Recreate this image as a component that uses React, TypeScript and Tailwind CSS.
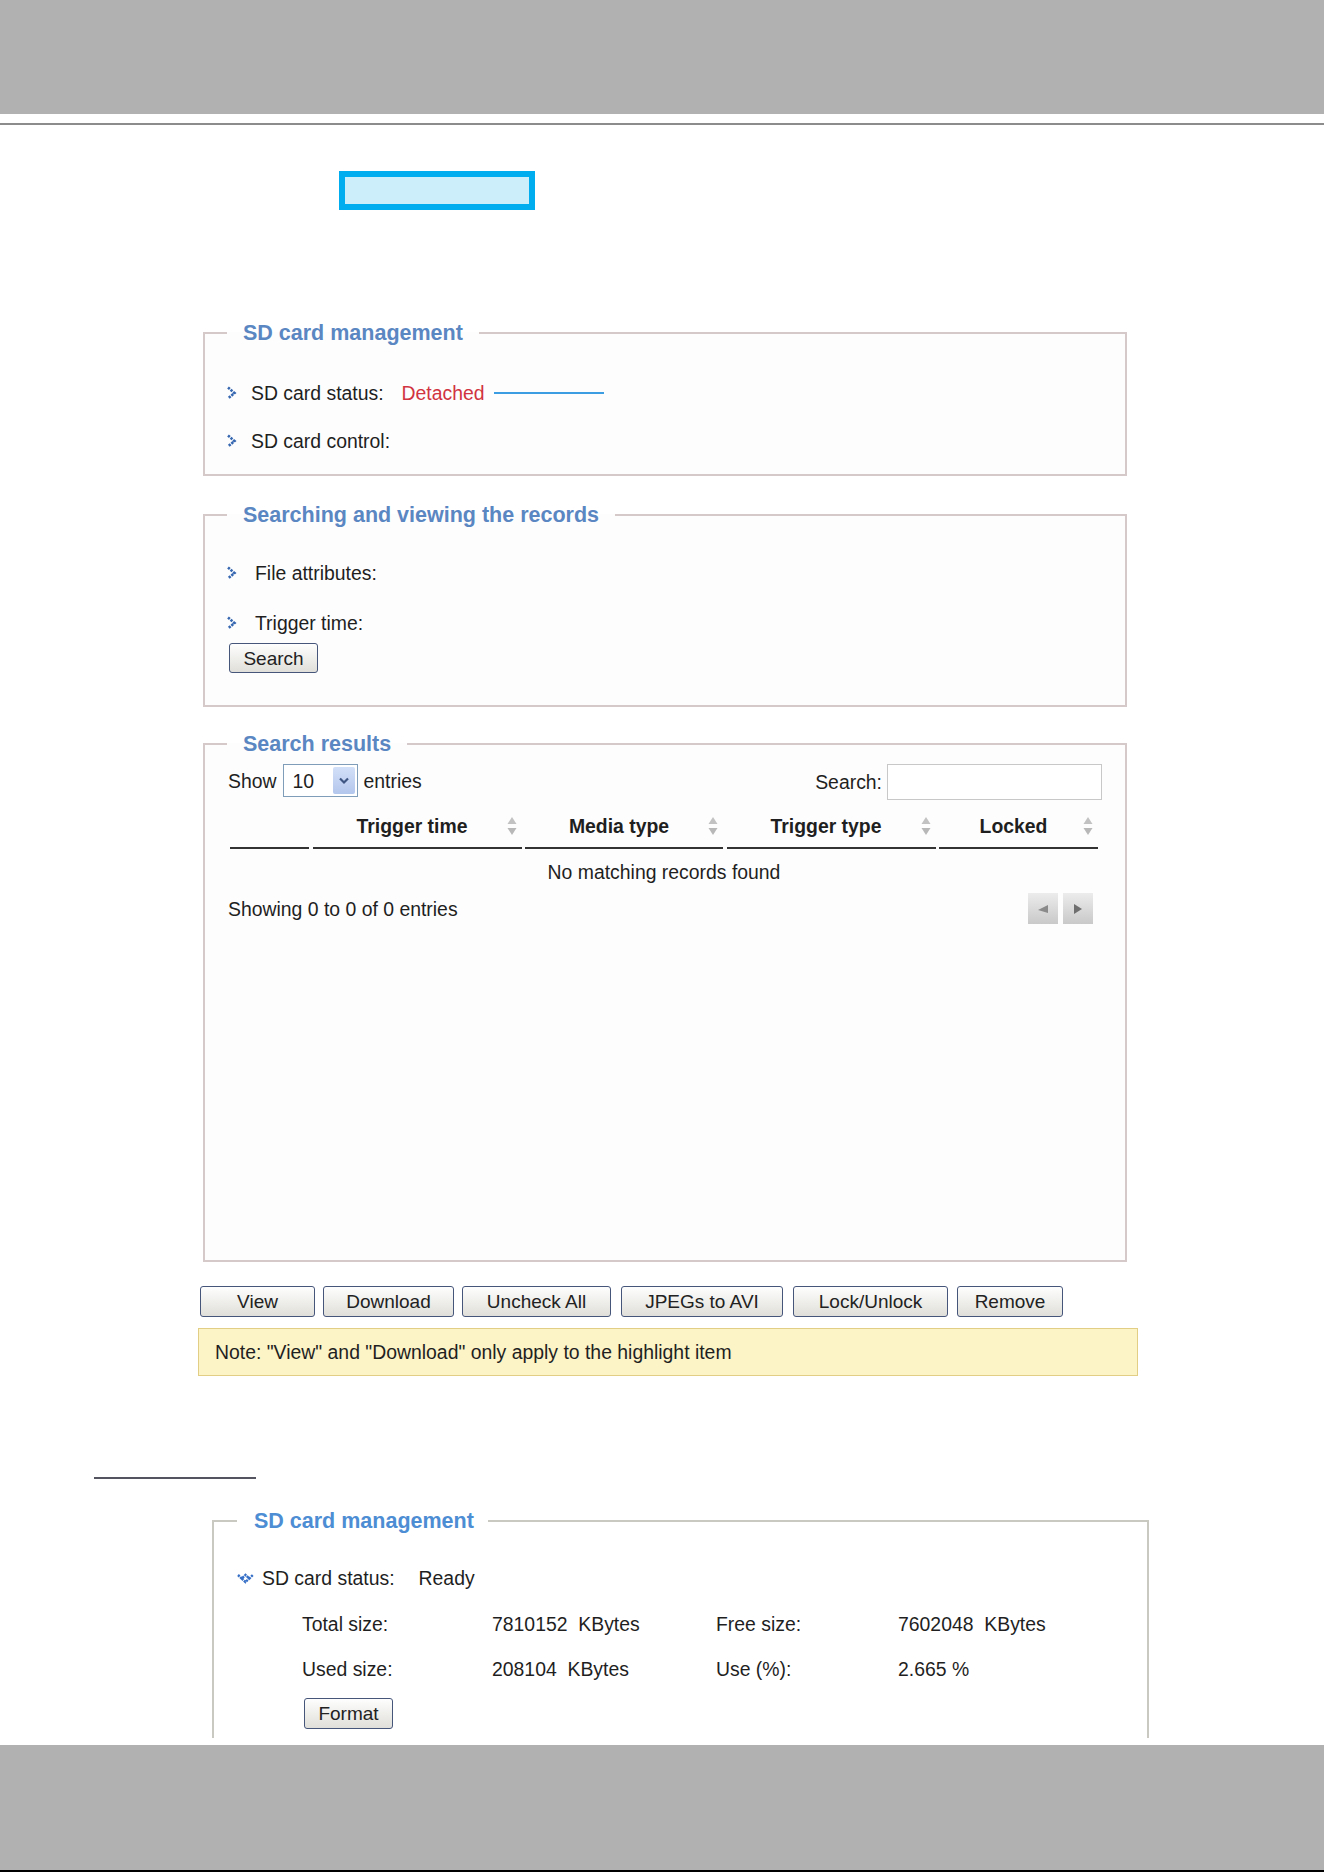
import React from "react";

const sans = "font-['Liberation_Sans',Arial,sans-serif]";

// small dotted chevron used in front of each setting row
function RightArrow() {
  return (
    <svg width="11" height="14" viewBox="0 0 11 14" className="shrink-0">
      <path
        d="M2 1.5 L8.5 7 L2 12.5"
        fill="none"
        stroke="#3566b0"
        strokeWidth="2.6"
        strokeDasharray="2.4 1"
      />
    </svg>
  );
}

// expanded state marker
function DownArrow() {
  return (
    <svg width="17" height="11" viewBox="0 0 17 11" className="shrink-0">
      <path
        d="M1 2 L4.75 5.5 L8.5 2 L12.25 5.5 L16 2 M4.75 5.5 L8.5 9 L12.25 5.5"
        fill="none"
        stroke="#356ec6"
        strokeWidth="2.4"
        strokeDasharray="2.2 0.8"
      />
    </svg>
  );
}

function SortIcon() {
  return (
    <svg width="10" height="20" viewBox="0 0 10 20">
      <polygon points="5,1 9.5,8 0.5,8" fill="#c2c2c2" />
      <polygon points="0.5,12 9.5,12 5,19" fill="#b8b8b8" />
    </svg>
  );
}

function Panel({
  title,
  children,
}: {
  title: string;
  children: React.ReactNode;
}) {
  return (
    <fieldset className="ml-[5px] w-[924px] border-2 border-[#d6c9c9] bg-[#fdfdfd]">
      <legend className="ml-[22px] px-[16px] text-[21.5px] leading-[24px] font-bold text-[#5a86c2]">
        {title}
      </legend>
      {children}
    </fieldset>
  );
}

function Btn({ label, className }: { label: string; className: string }) {
  return (
    <button
      className={`rounded-[3px] border border-[#46557a] bg-linear-to-b from-[#fefefe] to-[#e0dfd9] text-[19px] leading-none text-[#222] ${className}`}
    >
      {label}
    </button>
  );
}

const columns = [
  { label: "", w: "w-[79px]", sort: false },
  { label: "Trigger time", w: "w-[209px]", sort: true },
  { label: "Media type", w: "w-[198px]", sort: true },
  { label: "Trigger type", w: "w-[209px]", sort: true },
  { label: "Locked", w: "w-[159px]", sort: true },
];

const actions = [
  { label: "View", className: "w-[115px]" },
  { label: "Download", className: "ml-[8px] w-[131px]" },
  { label: "Uncheck All", className: "ml-[8px] w-[149px]" },
  { label: "JPEGs to AVI", className: "ml-[10px] w-[162px]" },
  { label: "Lock/Unlock", className: "ml-[10px] w-[155px]" },
  { label: "Remove", className: "ml-[9px] w-[106px]" },
];

export default function App() {
  return (
    <div className={`${sans} w-[1324px] bg-white text-[19.4px] leading-[24px] text-[#1f1f1f]`}>
      {/* page header */}
      <div className="h-[114px] bg-[#b1b1b1]" />
      <div className="mt-[9px] h-[2px] bg-[#8c8c8c]" />

      {/* highlighted tab */}
      <div className="mt-[46px] ml-[339px] h-[39px] w-[196px] border-[6px] border-[#00aeef] bg-[#cceefa]" />

      <div className="mt-[111px] ml-[198px] w-[942px]">
        {/* SD card management */}
        <Panel title="SD card management">
          <div className="pl-[21px] pt-[36px] pb-[21px]">
            <div className="flex h-[24px] items-center gap-[14px]">
              <RightArrow />
              <span>SD card status:</span>
              <span className="ml-[4px] text-[#d13340]">Detached</span>
              <span className="-ml-[5px] h-[2px] w-[110px] bg-[#3d9de2]" />
            </div>
            <div className="mt-[24px] flex h-[24px] items-center gap-[14px]">
              <RightArrow />
              <span>SD card control:</span>
            </div>
          </div>
        </Panel>

        {/* Searching and viewing */}
        <div className="mt-[27px]">
          <Panel title="Searching and viewing the records">
            <div className="pl-[21px] pt-[34px] pb-[32px]">
              <div className="flex h-[24px] items-center gap-[18px]">
                <RightArrow />
                <span>File attributes:</span>
              </div>
              <div className="mt-[26px] flex h-[24px] items-center gap-[18px]">
                <RightArrow />
                <span>Trigger time:</span>
              </div>
              <Btn label="Search" className="mt-[8px] ml-[3px] h-[30px] w-[89px]" />
            </div>
          </Panel>
        </div>

        {/* Search results */}
        <div className="mt-[25px]">
          <Panel title="Search results">
            <div className="pl-[25px] pr-[27px] pt-[8px] pb-[336px]">
              <div className="-ml-[2px] -mr-[4px] flex h-[37px] items-start justify-between">
                <div className="flex h-[33px] items-center">
                  <span>Show</span>
                  <div className="ml-[6px] flex h-[33px] w-[75px] items-center border border-[#7f9db9] bg-white pl-[9px]">
                    <span className="flex-1">10</span>
                    <span className="mr-[2px] flex h-[27px] w-[22px] items-center justify-center rounded-[2px] bg-linear-to-b from-[#d3e0f8] to-[#b3c6ec]">
                      <svg width="10" height="8" viewBox="0 0 10 8">
                        <path d="M1 1.5 L5 5.5 L9 1.5" fill="none" stroke="#3f5683" strokeWidth="2.2" />
                      </svg>
                    </span>
                  </div>
                  <span className="ml-[6px]">entries</span>
                </div>
                <div className="flex items-center">
                  <span>Search:</span>
                  <div className="ml-[5px] h-[36px] w-[215px] border border-[#c8c8c8] bg-white" />
                </div>
              </div>

              {/* table head */}
              <div className="mt-[4px] flex gap-x-[3.5px]">
                {columns.map((col, i) => (
                  <div
                    key={i}
                    className={`relative flex h-[44px] items-center justify-center border-b-2 border-[#333] pr-[10px] font-bold ${col.w}`}
                  >
                    {col.label}
                    {col.sort && (
                      <span className="absolute right-[5px] top-[11px]">
                        <SortIcon />
                      </span>
                    )}
                  </div>
                ))}
              </div>

              <div className="mt-[11px] text-center">No matching records found</div>

              <div className="-ml-[2px] mt-[9px] flex h-[31px] items-center justify-between pr-[5px]">
                <span>Showing 0 to 0 of 0 entries</span>
                <div className="flex gap-[5px]">
                  <span className="flex h-[31px] w-[30px] items-center justify-center bg-linear-to-b from-[#ececec] to-[#c9c9c9]">
                    <svg width="12" height="10" viewBox="0 0 12 10">
                      <polygon points="1,6 11,1 11,9" fill="#8a8a8a" />
                    </svg>
                  </span>
                  <span className="flex h-[31px] w-[30px] items-center justify-center bg-linear-to-b from-[#ececec] to-[#c9c9c9]">
                    <svg width="10" height="12" viewBox="0 0 10 12">
                      <polygon points="1,1 9,6 1,11" fill="#6f6f6f" />
                    </svg>
                  </span>
                </div>
              </div>
            </div>
          </Panel>
        </div>

        {/* action buttons */}
        <div className="mt-[24px] ml-[2px] flex">
          {actions.map((a) => (
            <Btn key={a.label} label={a.label} className={`h-[31px] ${a.className}`} />
          ))}
        </div>

        <div className="mt-[11px] flex h-[48px] w-[940px] items-center border border-[#e2cf85] bg-[#fcf3c6] pl-[16px]">
          Note: "View" and "Download" only apply to the highlight item
        </div>
      </div>

      <div className="mt-[101px] ml-[94px] h-[2px] w-[162px] bg-[#545460]" />

      {/* SD card status once a card is inserted */}
      <fieldset className="mt-[30px] ml-[212px] h-[229px] w-[937px] border-2 border-b-0 border-[#c9c9c1]">
        <legend className="ml-[23px] pl-[17px] pr-[14px] text-[21.5px] leading-[24px] font-bold text-[#4d8dd3]">
          SD card management
        </legend>
        <div className="pl-[23px] pt-[33px]">
          <div className="flex h-[24px] items-center gap-[8px]">
            <DownArrow />
            <span>SD card status:</span>
            <span className="ml-[16px]">Ready</span>
          </div>
          <div className="mt-[22px] ml-[65px] grid grid-cols-[190px_224px_182px_1fr] gap-y-[21px] whitespace-pre">
            <span>Total size:</span>
            <span>7810152  KBytes</span>
            <span>Free size:</span>
            <span>7602048  KBytes</span>
            <span>Used size:</span>
            <span>208104  KBytes</span>
            <span>Use (%):</span>
            <span>2.665 %</span>
          </div>
          <Btn label="Format" className="mt-[17px] ml-[67px] h-[31px] w-[89px]" />
        </div>
      </fieldset>

      {/* page footer */}
      <div className="mt-[7px] h-[125px] bg-[#b1b1b1]" />
      <div className="h-[2px] bg-black" />
    </div>
  );
}
